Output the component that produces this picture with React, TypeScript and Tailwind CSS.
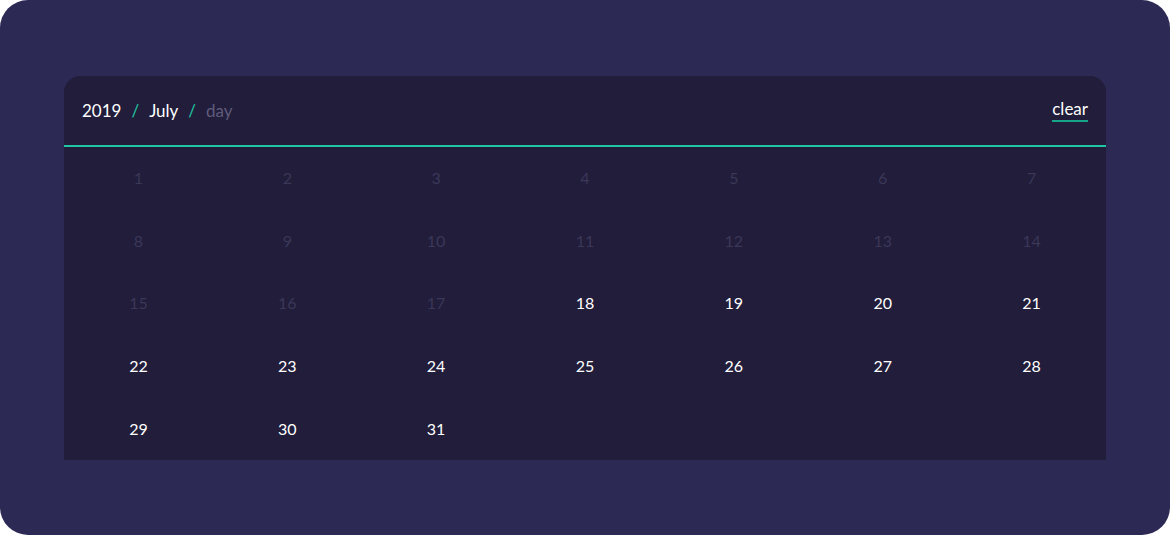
const days = Array.from({ length: 31 }, (_, i) => i + 1);

export default function App() {
  return (
    <div className="h-[535px] w-[1170px] bg-white font-['Lato','Noto_Sans',sans-serif]">
      <div className="flex h-full w-full flex-col rounded-[28px] bg-[#2c2a55] px-[64px] pt-[76px]">
        <div className="flex flex-col rounded-t-[16px] bg-[#211d3a]">
          <div className="flex h-[69px] items-center justify-between px-[18px]">
            <div className="flex items-center gap-[10px] text-[17px] text-white">
              <span>2019</span>
              <span className="text-[#1fc6a2]">/</span>
              <span>July</span>
              <span className="text-[#1fc6a2]">/</span>
              <span className="text-[#5f5b7c]">day</span>
            </div>
            <button className="border-b-2 border-[#17a58a] pb-[1px] text-[17px] leading-[20px] text-white">
              clear
            </button>
          </div>
          <div className="h-[2px] bg-[#1fc6a2]" />
          <div className="grid grid-cols-7">
            {days.map((d) => (
              <div
                key={d}
                className={`flex h-[62.6px] items-center justify-center text-[16px] ${
                  d < 18 ? "text-[#3b3759]" : "text-white"
                }`}
              >
                {d}
              </div>
            ))}
          </div>
        </div>
      </div>
    </div>
  );
}
